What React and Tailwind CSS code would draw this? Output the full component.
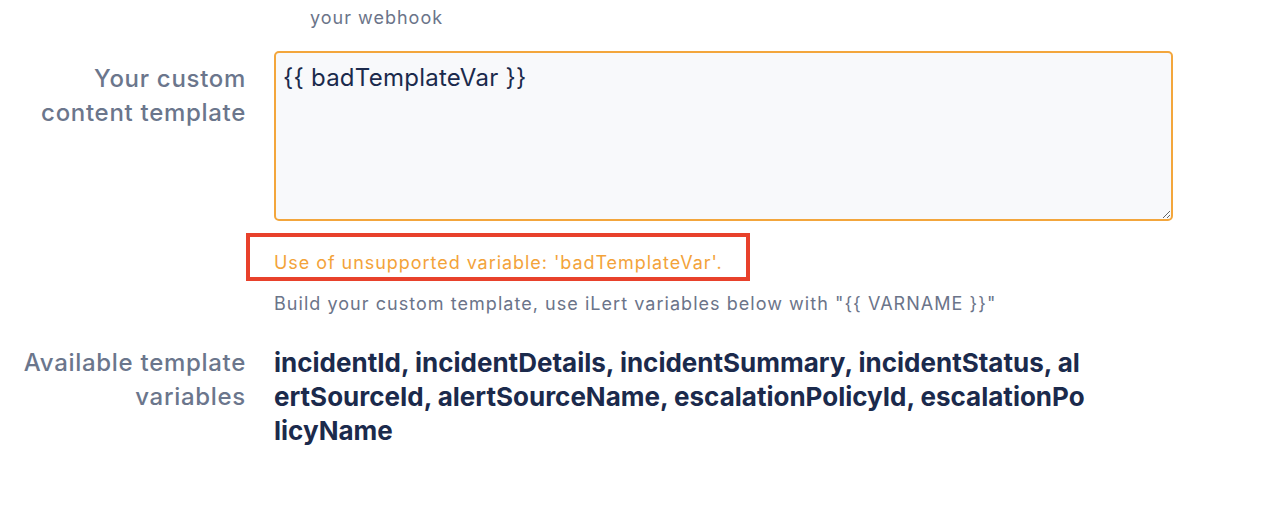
import React from 'react';

const VARIABLES = [
  'incidentId',
  'incidentDetails',
  'incidentSummary',
  'incidentStatus',
  'alertSourceId',
  'alertSourceName',
  'escalationPolicyId',
  'escalationPolicyName',
];

export default function App() {
  return (
    <div className="w-full h-[508px] overflow-hidden bg-white font-['Inter',sans-serif]">
      {/* Tail of previous field's help text */}
      <p className="pl-[310px] pt-[6px] text-[18px] leading-[24px] tracking-[1px] text-[#6b7489]">your webhook</p>

      {/* Custom template field */}
      <div className="mt-[21px] grid grid-cols-[246px_899px] gap-x-[28px]">
        <label className="pt-[11px] text-right text-[24px] leading-[34px] tracking-[0.7px] font-medium text-[#6b768c]">
          Your custom
          <br />
          content template
        </label>
        <div>
          <textarea
            defaultValue="{{ badTemplateVar }}"
            className="block w-full h-[170px] resize-y rounded-[5px] border-2 border-[#f3a63c] bg-[#f8f9fb] px-[7px] pt-[8px] text-[24px] leading-[34px] tracking-[0.25px] text-[#1b2a4c] outline-none font-['Inter',sans-serif]"
          />
          <div className="relative mt-[30px]">
            <p className="text-[18px] leading-[24px] tracking-[0.95px] text-[#f3a33a]">
              Use of unsupported variable: 'badTemplateVar'.
            </p>
            {/* annotation box */}
            <div className="absolute left-[-28px] top-[-18px] w-[504px] h-[48px] border-4 border-[#e8412b] pointer-events-none" />
          </div>
          <p className="mt-[17px] text-[18px] leading-[24px] tracking-[1.04px] text-[#6b7489]">
            Build your custom template, use iLert variables below with "{'{{'} VARNAME {'}}'}"
          </p>
        </div>
      </div>

      {/* Available variables */}
      <div className="mt-[30px] grid grid-cols-[246px_899px] gap-x-[28px]">
        <span className="text-right text-[24px] leading-[34px] tracking-[0.7px] font-medium text-[#6b768c]">
          Available template
          <br />
          variables
        </span>
        <p className="w-[812px] break-all text-[26px] leading-[34px] font-bold text-[#1b2a4c]">
          {VARIABLES.join(', ')}
        </p>
      </div>
    </div>
  );
}
